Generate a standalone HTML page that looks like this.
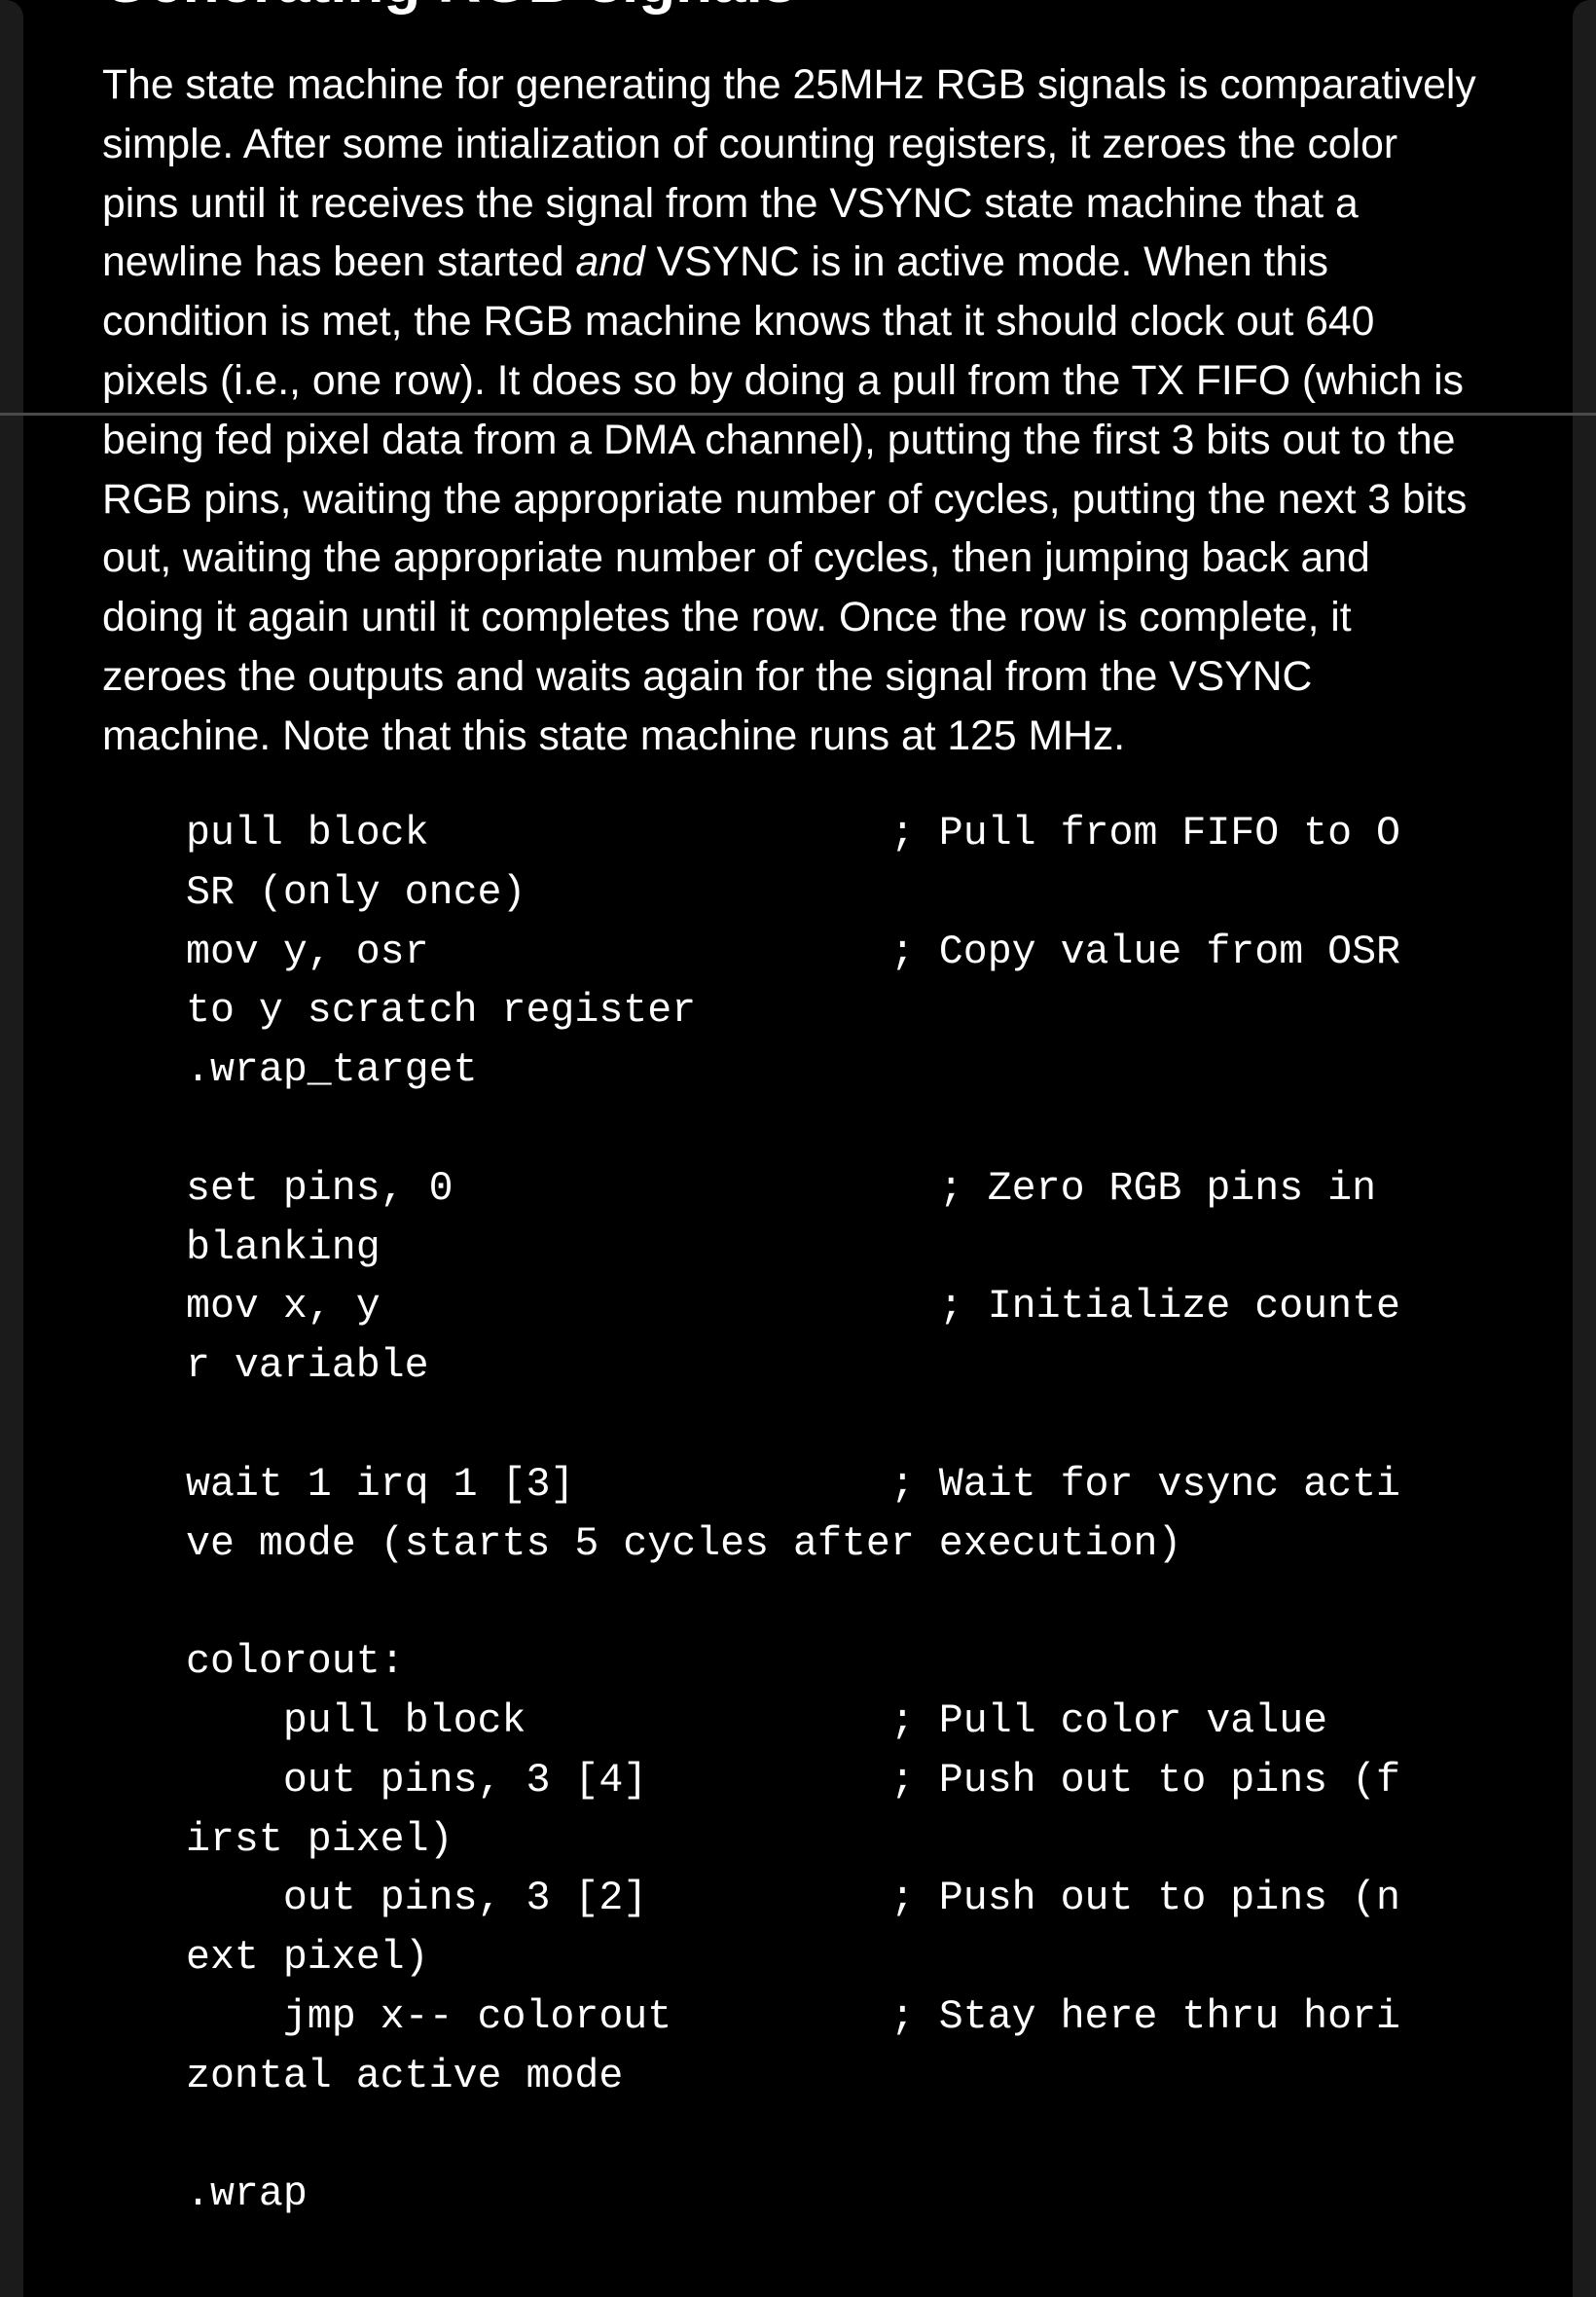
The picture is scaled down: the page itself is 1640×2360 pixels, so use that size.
<!DOCTYPE html>
<html><head><meta charset="utf-8"><style>
html,body{margin:0;padding:0;background:#000;}
body{width:1640px;height:2360px;position:relative;overflow:hidden;color:#fff;}
.l{position:absolute;left:0;top:0;width:24px;height:2360px;background:#1b1b1b;border-top-right-radius:18px;}
.r{position:absolute;right:0;top:0;width:24px;height:2360px;background:#1b1b1b;border-top-left-radius:18px;}
.hr{position:absolute;left:0;top:424px;width:1640px;height:3px;background:#4a4a4a;}
h2{position:absolute;left:105px;top:-54px;margin:0;font:bold 62px "Liberation Sans",sans-serif;}
p{position:absolute;left:105px;top:57px;width:1500px;margin:0;font:42.7px/60.8px "Liberation Sans",sans-serif;}
pre{position:absolute;left:191px;top:827px;margin:0;font:41.6px/60.8px "Liberation Mono",monospace;}
</style></head><body>
<div class="l"></div><div class="r"></div>
<h2>Generating RGB signals</h2>
<p>The state machine for generating the 25MHz RGB signals is comparatively<br>simple. After some intialization of counting registers, it zeroes the color<br>pins until it receives the signal from the VSYNC state machine that a<br>newline has been started <i>and</i> VSYNC is in active mode. When this<br>condition is met, the RGB machine knows that it should clock out 640<br>pixels (i.e., one row). It does so by doing a pull from the TX FIFO (which is<br>being fed pixel data from a DMA channel), putting the first 3 bits out to the<br>RGB pins, waiting the appropriate number of cycles, putting the next 3 bits<br>out, waiting the appropriate number of cycles, then jumping back and<br>doing it again until it completes the row. Once the row is complete, it<br>zeroes the outputs and waits again for the signal from the VSYNC<br>machine. Note that this state machine runs at 125 MHz.</p>
<pre>pull block                   ; Pull from FIFO to O
SR (only once)
mov y, osr                   ; Copy value from OSR
to y scratch register
.wrap_target

set pins, 0                    ; Zero RGB pins in
blanking
mov x, y                       ; Initialize counte
r variable

wait 1 irq 1 [3]             ; Wait for vsync acti
ve mode (starts 5 cycles after execution)

colorout:
    pull block               ; Pull color value
    out pins, 3 [4]          ; Push out to pins (f
irst pixel)
    out pins, 3 [2]          ; Push out to pins (n
ext pixel)
    jmp x-- colorout         ; Stay here thru hori
zontal active mode

.wrap</pre>
<div class="hr"></div>
</body></html>
